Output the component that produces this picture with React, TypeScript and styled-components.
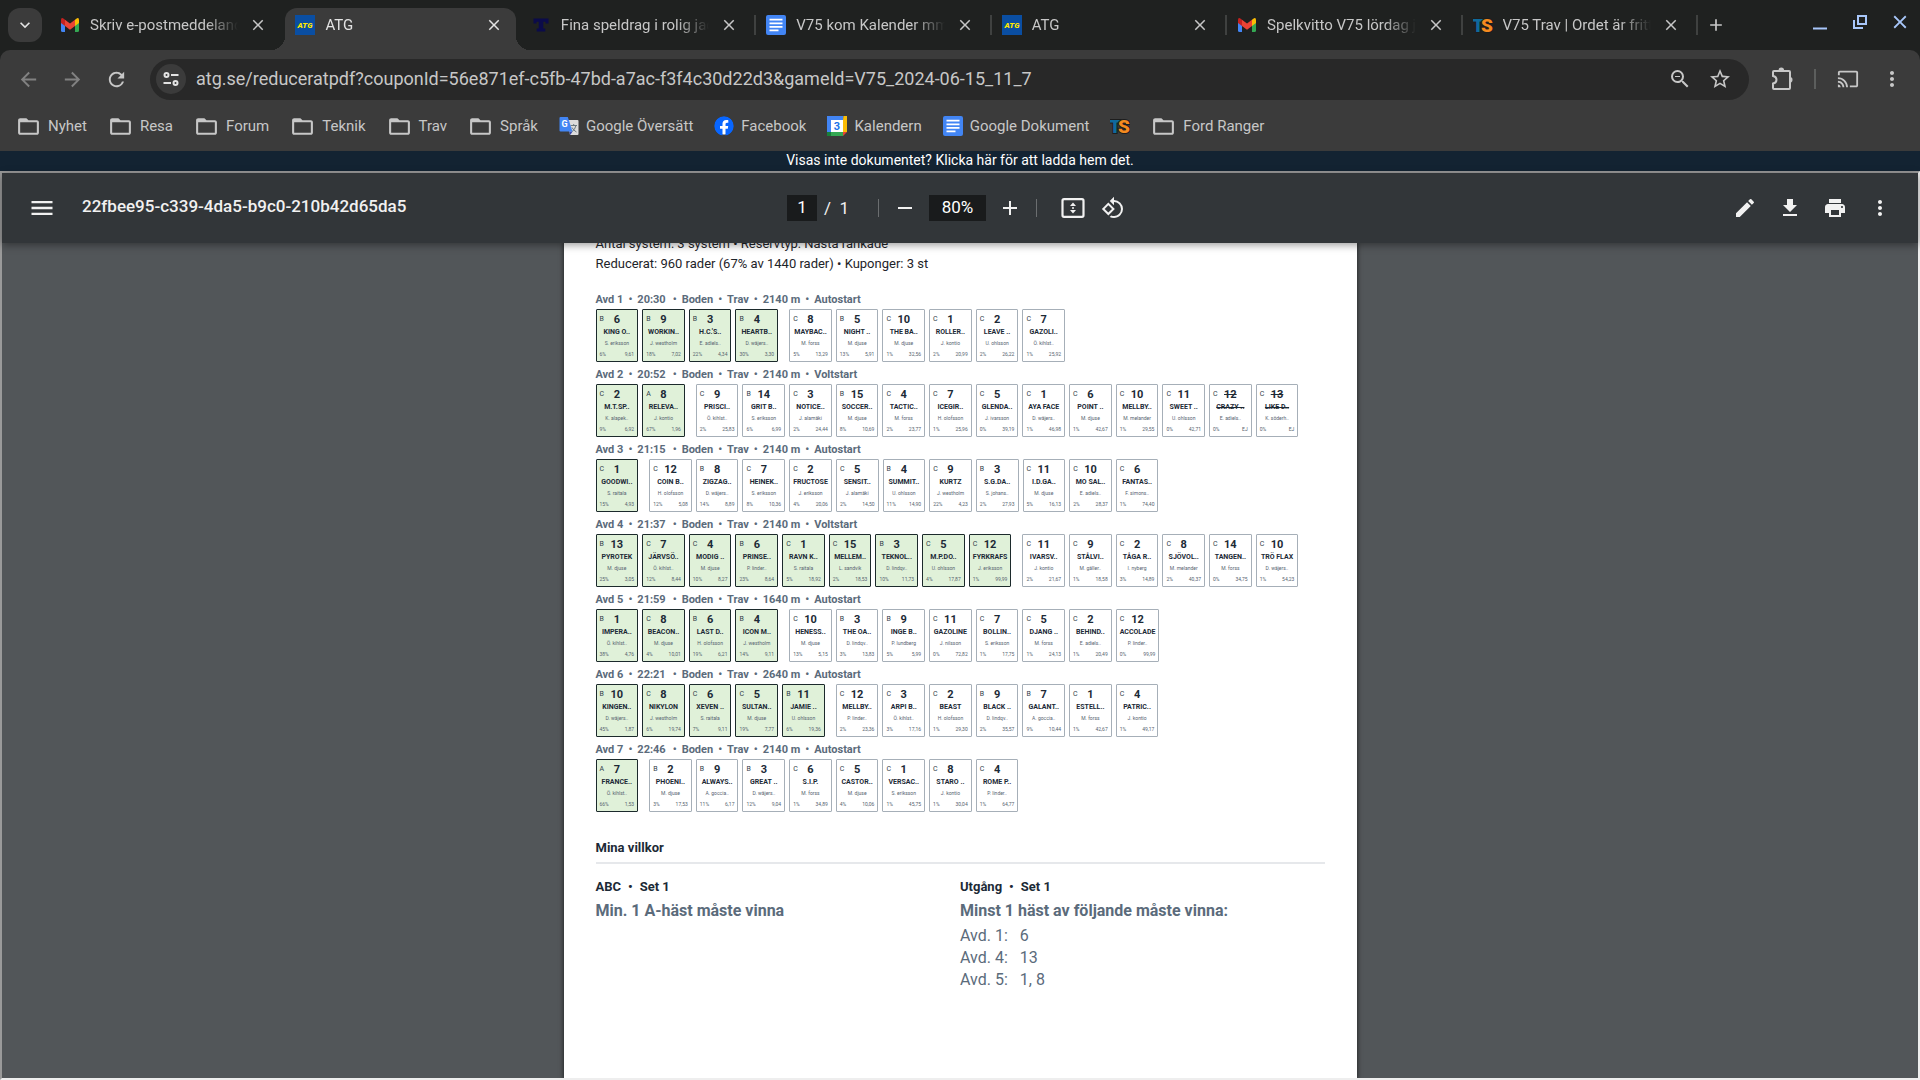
import React from "react";
import styled, { createGlobalStyle, css } from "styled-components";
import {
  MdAdd,
  MdArrowBack,
  MdArrowForward,
  MdClose,
  MdEdit,
  MdFileDownload,
  MdFolderOpen,
  MdKeyboardArrowDown,
  MdMenu,
  MdMoreVert,
  MdPrint,
  MdRefresh,
  MdRemove,
  MdRotate90DegreesCcw,
  MdStarBorder,
  MdZoomOut,
  MdCast,
} from "react-icons/md";
import { FaFacebook } from "react-icons/fa";

const GlobalStyle = createGlobalStyle`
  * { box-sizing: border-box; }
  html, body, #root { height: 100%; }
  body { margin: 0; overflow: hidden; font-family: Roboto, "Liberation Sans", sans-serif; }
  button, input { font: inherit; }
  button { border: 0; padding: 0; background: none; color: inherit; cursor: pointer; }
  h1, h2, h3, p, ul, dl, dd { margin: 0; padding: 0; font-weight: inherit; font-size: inherit; }
  ul { list-style: none; }
  a { color: inherit; text-decoration: none; }
`;

const Window = styled.div`
  display: flex;
  flex-direction: column;
  height: 100vh;
  background: #1f2120;
`;

/* ---------- Tab strip ---------- */

const TabStrip = styled.header`
  display: flex;
  align-items: center;
  flex: none;
  height: 50px;
  padding: 0 8px;
  color: #c7c7c7;
`;

const TabSearch = styled.button`
  display: grid;
  place-items: center;
  flex: none;
  width: 34px;
  height: 34px;
  border-radius: 12px;
  background: #3b3b3b;
  color: #e3e3e3;
  font-size: 20px;
`;

const Tabs = styled.nav`
  display: flex;
  flex: 0 1 1648px;
  min-width: 0;
  margin-left: 8px;
`;

const TabItem = styled.div`
  display: flex;
  align-items: center;
  flex: 1 1 0;
  min-width: 0;
  height: 50px;
`;

const TabBody = styled.div<{ $active?: boolean }>`
  position: relative;
  display: flex;
  align-items: center;
  gap: 8px;
  flex: 1;
  min-width: 0;
  height: 34px;
  padding: 0 10px;
  ${(p) =>
    p.$active &&
    css`
      height: 42px;
      padding-bottom: 8px;
      align-self: flex-end;
      border-radius: 12px 12px 0 0;
      background: #3b3b3b;
      color: #e3e3e3;
      &::before,
      &::after {
        content: "";
        position: absolute;
        bottom: 0;
        width: 14px;
        height: 14px;
      }
      &::before {
        right: 100%;
        background: radial-gradient(circle at 0 0, transparent 14px, #3b3b3b 14px);
      }
      &::after {
        left: 100%;
        background: radial-gradient(circle at 100% 0, transparent 14px, #3b3b3b 14px);
      }
    `}
`;

const TabTitle = styled.button`
  display: flex;
  align-items: center;
  flex: 1;
  min-width: 0;
  gap: 10px;
  text-align: left;
  font-size: 15px;
  line-height: 20px;
`;

const TabText = styled.span`
  flex: 1;
  min-width: 0;
  overflow: hidden;
  white-space: nowrap;
  mask-image: linear-gradient(to right, #000 calc(100% - 32px), transparent);
`;

const IconButton = styled.button<{ $size?: number; $glyph?: number; $dim?: boolean }>`
  display: grid;
  place-items: center;
  flex: none;
  width: ${(p) => p.$size ?? 24}px;
  height: ${(p) => p.$size ?? 24}px;
  font-size: ${(p) => p.$glyph ?? 24}px;
  opacity: ${(p) => (p.$dim ? 0.5 : 1)};
`;

const TabDivider = styled.span<{ $hidden?: boolean }>`
  flex: none;
  width: 2px;
  height: 20px;
  margin-left: 3px;
  background: ${(p) => (p.$hidden ? "transparent" : "#3f4140")};
`;

const NewTab = styled(IconButton)`
  margin-left: 6px;
`;

const WindowControls = styled.div`
  display: flex;
  gap: 16px;
  margin-left: auto;
  padding-bottom: 6px;
  color: #a8c7fa;
`;

/* ---------- Address bar and bookmarks ---------- */

const Chrome = styled.div`
  flex: none;
  border-radius: 10px 10px 0 0;
  background: #3b3b3b;
  color: #c7c7c7;
`;

const AddressRow = styled.div`
  display: flex;
  align-items: center;
  height: 58px;
  padding: 0 16px;
`;

const NavButtons = styled.div`
  display: flex;
  gap: 20px;
  flex: none;
`;

const Omnibox = styled.div`
  display: flex;
  align-items: center;
  flex: 1;
  height: 41px;
  margin: 0 21px 0 22px;
  padding: 0 17px 0 6px;
  border-radius: 21px;
  background: #282828;
`;

const SiteInfo = styled.button`
  display: grid;
  place-items: center;
  width: 30px;
  height: 30px;
  border-radius: 50%;
  background: #3b3b3b;
`;

const UrlInput = styled.input`
  flex: 1;
  min-width: 0;
  margin-left: 10px;
  padding: 0;
  border: 0;
  outline: 0;
  background: none;
  color: #c7c7c7;
  font-size: 18px;
  line-height: 24px;
`;

const OmniboxActions = styled.div`
  display: flex;
  gap: 16px;
`;

const ToolbarActions = styled.div`
  display: flex;
  align-items: center;
  gap: 20px;
`;

const ToolbarDivider = styled.span`
  width: 2px;
  height: 20px;
  background: #5c5e5d;
`;

const Bookmarks = styled.nav`
  display: flex;
  align-items: center;
  gap: 21px;
  height: 43px;
  padding: 0 16px 7px;
`;

const Bookmark = styled.a`
  display: flex;
  align-items: center;
  gap: 7px;
  font-size: 15px;
  line-height: 20px;
  white-space: nowrap;
`;

/* ---------- Web page ---------- */

const DownloadBanner = styled.a`
  flex: none;
  height: 20px;
  background: #132332;
  color: #fff;
  font-size: 14px;
  line-height: 19px;
  text-align: center;
`;

const Viewer = styled.main`
  display: flex;
  flex-direction: column;
  flex: 1;
  min-height: 0;
  border: 2px solid;
  border-color: #9a9a9a #eee #eee #9a9a9a;
  background: #525659;
`;

const PdfToolbar = styled.div`
  position: relative;
  display: grid;
  grid-template-columns: 1fr auto 1fr;
  align-items: center;
  flex: none;
  height: 70px;
  padding: 0 26px;
  background: #323639;
  color: #f1f1f1;
  box-shadow: 0 2px 8px rgba(0, 0, 0, 0.4);
`;

const PdfStart = styled.div`
  display: flex;
  align-items: center;
  gap: 26px;
`;

const FileName = styled.h1`
  padding-bottom: 4px;
  font-size: 17px;
  font-weight: 500;
  line-height: 24px;
`;

const PdfCenter = styled.div`
  display: flex;
  align-items: center;
  padding-right: 8px;
  font-size: 17px;
  line-height: 24px;
`;

const ToolbarInput = styled.input<{ $width: number }>`
  width: ${(p) => p.$width}px;
  height: 26px;
  padding: 0 0 2px;
  border: 0;
  background: #191b1c;
  color: #fff;
  text-align: center;
`;

const PageCount = styled.span`
  margin-left: 7px;
  white-space: pre;
`;

const PdfDivider = styled.span<{ $left: number; $right: number }>`
  width: 1px;
  height: 18px;
  margin: 0 ${(p) => p.$right}px 0 ${(p) => p.$left}px;
  background: #6b6e70;
`;

const ZoomGroup = styled.div`
  display: flex;
  align-items: center;
  gap: 12px;
`;

const FitGroup = styled.div`
  display: flex;
  align-items: center;
  gap: 16px;
`;

const PdfEnd = styled.div`
  display: flex;
  justify-content: flex-end;
  gap: 21px;
`;

const ScrollArea = styled.div`
  display: flex;
  justify-content: center;
  flex: 1;
  min-height: 0;
  overflow: hidden;
`;

const Sheet = styled.article`
  flex: 0 1 793px;
  padding: 0 32px;
  background: #fff;
  box-shadow: 0 0 4px 1px rgba(0, 0, 0, 0.5);
  color: #1c2a36;
`;

const Summary = styled.div`
  margin-top: -9px;
  padding-bottom: 12px;
  font-size: 13px;
  line-height: 20px;
  color: #1e2429;
`;

const Race = styled.section`
  padding-top: 4px;
`;

const RaceHeading = styled.h2`
  display: flex;
  gap: 5px;
  color: #5b6b7b;
  font-size: 11px;
  font-weight: 700;
  line-height: 19px;
`;

const StartTime = styled.span`
  margin-right: 2px;
`;

const Runners = styled.ul`
  display: flex;
  gap: 4px;
`;

const Runner = styled.li<{ $picked: boolean; $spaced: boolean }>`
  flex: 0 0 calc((100% - 89px) / 15);
  height: 53px;
  margin-bottom: -1px;
  margin-left: ${(p) => (p.$spaced ? 7 : 0)}px;
  padding: 3px 3px 0;
  border: 1px solid ${(p) => (p.$picked ? "#1c2a2c" : "#a6afb8")};
  border-radius: 1px;
  background: ${(p) => (p.$picked ? "#e0f1d9" : "#fff")};
  text-align: center;
  white-space: nowrap;
`;

const RunnerTop = styled.div`
  display: grid;
  grid-template-columns: 1fr auto 1fr;
  line-height: 13px;
`;

const Grade = styled.span`
  color: #2f3c48;
  font-size: 7px;
  text-align: left;
`;

const StartNumber = styled.strong<{ $scratched?: boolean }>`
  font-size: 11px;
  font-weight: 700;
  text-decoration: ${(p) => (p.$scratched ? "line-through" : "none")};
`;

const HorseName = styled.h3<{ $scratched?: boolean }>`
  display: flex;
  justify-content: center;
  font-size: 7px;
  font-weight: 700;
  line-height: 12px;
  text-decoration: ${(p) => (p.$scratched ? "line-through" : "none")};
`;

const Driver = styled.p`
  color: #56636f;
  font-size: 5px;
  line-height: 10px;
`;

const Stats = styled.div`
  display: flex;
  justify-content: space-between;
  color: #56636f;
  font-size: 5px;
  line-height: 12px;
`;

const Terms = styled.section`
  margin-top: 27px;
`;

const TermsTitle = styled.h2`
  padding-bottom: 4px;
  border-bottom: 2px solid #e6e8eb;
  font-size: 13px;
  font-weight: 700;
  line-height: 20px;
`;

const TermsGrid = styled.div`
  display: grid;
  grid-template-columns: 1fr 1fr;
  padding-top: 12px;
`;

const SetTitle = styled.h3`
  font-size: 13px;
  font-weight: 700;
  line-height: 22px;
`;

const SetBullet = styled.span`
  margin: 0 7px;
`;

const Rule = styled.p`
  margin-bottom: 1px;
  color: #5b6b7b;
  font-size: 16px;
  font-weight: 700;
  line-height: 26px;
`;

const LegList = styled.dl`
  display: grid;
  grid-template-columns: max-content 1fr;
  column-gap: 12px;
  color: #5b6b7b;
  font-size: 16px;
  line-height: 22px;
`;

/* ---------- Drawn icons ---------- */

const GmailIcon = () => (
  <svg width="20" height="20" viewBox="0 0 20 20" aria-hidden="true">
    <path d="M1 5v10.500q0 1.500 1.500 1.500H5V8.200z" fill="#4285f4" />
    <path d="M19 5v10.500q0 1.500-1.500 1.500H15V8.200z" fill="#34a853" />
    <path d="M15 4.800 17 3.300Q19 2.500 19 5v3l-4 3z" fill="#fbbc04" />
    <path d="M5 4.800 3 3.300Q1 2.500 1 5v3l4 3z" fill="#c5221f" />
    <path d="M5 4.800v6.200l5 3.800 5-3.800V4.800l-5 3.800z" fill="#ea4335" />
  </svg>
);

const AtgIcon = () => (
  <svg width="20" height="20" viewBox="0 0 20 20" aria-hidden="true">
    <rect width="20" height="20" fill="#0a4ea2" />
    <text x="10" y="12.700" textAnchor="middle" fontSize="8" fontWeight="900" fontStyle="italic" fill="#ffe600">
      ATG
    </text>
  </svg>
);

const TIcon = () => (
  <svg width="20" height="20" viewBox="0 0 20 20" aria-hidden="true">
    <path d="M2.500 3.500h15v5h-3V6.800h-2.200v6.700h2v3H5.700v-3h2V6.800H5.500v1.700h-3z" fill="#0b0b4a" />
  </svg>
);

const DocsIcon = () => (
  <svg width="20" height="20" viewBox="0 0 20 20" aria-hidden="true">
    <rect width="20" height="20" rx="2" fill="#4285f4" />
    <path d="M3.500 4.700h13M3.500 8.300h13M3.500 11.800h13M3.500 15.300h9" stroke="#fff" strokeWidth="1.800" />
  </svg>
);

const TsIcon = () => (
  <svg width="20" height="20" viewBox="0 0 20 20" aria-hidden="true">
    <g fontFamily="Roboto" fontWeight="900" fontSize="19" stroke="#1d1d1d" strokeWidth="2" paintOrder="stroke">
      <text x="-1" y="16.700" fill="#0f6a9c">T</text>
      <text x="8" y="16.700" fill="#f58a1f">S</text>
    </g>
  </svg>
);

const TranslateIcon = () => (
  <svg width="20" height="20" viewBox="0 0 20 20" aria-hidden="true">
    <path d="M8 4h10.500q1 0 1 1v13q0 1-1 1H11z" fill="#dcdcdc" />
    <path d="M11.500 9.500h6.500M14.700 8v1.500M17 9.500q-1 4.500-4.500 6.500M13 11.500q1.500 3 4.500 4.500" stroke="#6c7a80" fill="none" />
    <path d="m10 15.500 1.300 3.500 2.200-3.500z" fill="#3949ab" />
    <path d="M1.500 1h7.300l4.700 14.500h-12q-1 0-1-1V2q0-1 1-1z" fill="#4285f4" />
    <text x="2.500" y="11.200" fontSize="9" fontWeight="700" fill="#fff">G</text>
  </svg>
);

const FacebookIcon = styled(FaFacebook)`
  width: 20px;
  height: 20px;
  border-radius: 50%;
  background: radial-gradient(circle, #fff 8px, transparent 9px);
  color: #0866ff;
`;

const CalendarIcon = () => (
  <svg width="20" height="20" viewBox="0 0 20 20" aria-hidden="true">
    <path d="M0 0h16.500v4H4v12H0z" fill="#4285f4" />
    <path d="M16.500 0H20v16h-4V4z" fill="#fbbc04" />
    <path d="M0 16h16v4H0z" fill="#34a853" />
    <path d="M0 16h4v4H0z" fill="#188038" />
    <path d="M16 16h4l-4 4z" fill="#ea4335" />
    <path d="M4 4h12v12H4z" fill="#fff" />
    <text x="10" y="14" textAnchor="middle" fontSize="11" fontWeight="700" fill="#1a73e8">3</text>
  </svg>
);

const TuneIcon = () => (
  <svg width="18" height="18" viewBox="0 0 18 18" fill="none" stroke="#e3e3e3" strokeWidth="2" aria-hidden="true">
    <circle cx="4.500" cy="5" r="2" />
    <path d="M9 5h7.500M1.500 13H9" />
    <circle cx="13.500" cy="13" r="2" />
  </svg>
);

const ExtensionIcon = () => (
  <svg width="24" height="24" viewBox="0 2 24 24" fill="none" stroke="currentColor" strokeWidth="2" aria-hidden="true">
    <path d="M4 6h15q1 0 1 1v16q0 1-1 1H4q-1 0-1-1v-4.500q3.500-.500 3.500-3.700T3 11V7q0-1 1-1z" />
    <path d="M8.500 5.500a2.800 3 0 0 1 5.600 0zM20 12a2.500 2.800 0 0 1 0 5.600z" fill="currentColor" stroke="none" />
  </svg>
);

const FitPageIcon = () => (
  <svg width="24" height="24" viewBox="0 0 24 24" aria-hidden="true">
    <rect x="1.500" y="3.200" width="21" height="17.600" rx="1.500" fill="none" stroke="currentColor" strokeWidth="2.200" />
    <path d="M12 6.500 15 10H9zM12 17.500 9 14h6zM11 11.200h2v1.600h-2z" fill="currentColor" />
  </svg>
);

const MinimizeIcon = () => (
  <svg width="24" height="24" viewBox="0 0 24 24" aria-hidden="true">
    <path d="M5 18.500h14" stroke="currentColor" strokeWidth="2" />
  </svg>
);

const RestoreIcon = () => (
  <svg width="24" height="24" viewBox="0 0 24 24" fill="none" stroke="currentColor" strokeWidth="2" aria-hidden="true">
    <path d="M10 6h8v8h-8zM6 10v8h9" />
  </svg>
);

/* ---------- Data ---------- */

const tabs = [
  { title: "Skriv e-postmeddelanden", icon: <GmailIcon />, divider: false },
  { title: "ATG", icon: <AtgIcon />, active: true, divider: false },
  { title: "Fina speldrag i rolig jackpot", icon: <TIcon />, divider: true },
  { title: "V75 kom Kalender mm", icon: <DocsIcon />, divider: true },
  { title: "ATG", icon: <AtgIcon />, divider: true },
  { title: "Spelkvitto V75 lördag juni", icon: <GmailIcon />, divider: true },
  { title: "V75 Trav | Ordet är fritt", icon: <TsIcon />, divider: true },
];

const folder = <MdFolderOpen size={25} />;

const bookmarks = [
  { label: "Nyhet", icon: folder },
  { label: "Resa", icon: folder },
  { label: "Forum", icon: folder },
  { label: "Teknik", icon: folder },
  { label: "Trav", icon: folder },
  { label: "Språk", icon: folder },
  { label: "Google Översätt", icon: <TranslateIcon /> },
  { label: "Facebook", icon: <FacebookIcon /> },
  { label: "Kalendern", icon: <CalendarIcon /> },
  { label: "Google Dokument", icon: <DocsIcon /> },
  { label: "", icon: <TsIcon /> },
  { label: "Ford Ranger", icon: folder },
];

/* Each runner: grade | start number | name | driver | share | odds */
const races = [
  {
    time: "20:30", distance: "2140 m", start: "Autostart", picked: 4,
    runners: [
      "B|6|KING O..|S. eriksson|6%|9,61", "B|9|WORKIN..|J. westholm|18%|7,02", "B|3|H.C.'S..|E. adiels..|22%|4,34",
      "B|4|HEARTB..|D. wäjers..|30%|3,30", "C|8|MAYBAC..|M. forss|5%|13,29", "B|5|NIGHT ..|M. djuse|13%|5,91",
      "C|10|THE BA..|M. djuse|1%|32,56", "C|1|ROLLER..|J. kontio|2%|20,99", "C|2|LEAVE ..|U. ohlsson|2%|26,22",
      "C|7|GAZOLI..|Ö. kihlst..|1%|25,92",
    ],
  },
  {
    time: "20:52", distance: "2140 m", start: "Voltstart", picked: 2,
    runners: [
      "C|2|M.T.SP..|K. alapek..|9%|6,92", "A|8|RELEVA..|J. kontio|67%|1,96", "C|9|PRISCI..|Ö. kihlst..|2%|25,83",
      "B|14|GRIT B..|S. eriksson|6%|6,99", "C|3|NOTICE..|J. alamäki|2%|24,44", "B|15|SOCCER..|M. djuse|8%|10,69",
      "C|4|TACTIC..|M. forss|2%|23,77", "C|7|ICEGIR..|H. olofsson|1%|25,96", "C|5|GLENDA..|J. ivarsson|0%|39,19",
      "C|1|AYA FACE|D. wäjers..|1%|46,98", "C|6|POINT ..|M. djuse|1%|42,67", "C|10|MELLBY..|M. melander|1%|29,55",
      "C|11|SWEET ..|U. ohlsson|0%|42,71", "C|12|CRAZY ..|E. adiels..|0%|EJ", "C|13|LIKE D..|K. söderh..|0%|EJ",
    ],
  },
  {
    time: "21:15", distance: "2140 m", start: "Autostart", picked: 1,
    runners: [
      "C|1|GOODWI..|S. raitala|15%|4,93", "C|12|COIN B..|H. olofsson|12%|5,08", "B|8|ZIGZAG..|D. wäjers..|14%|8,89",
      "C|7|HEINEK..|S. eriksson|8%|10,36", "C|2|FRUCTOSE|J. eriksson|4%|20,06", "C|5|SENSIT..|J. alamäki|2%|14,50",
      "B|4|SUMMIT..|U. ohlsson|11%|14,90", "C|9|KURTZ|J. westholm|22%|4,23", "B|3|S.G.DA..|S. johans..|2%|27,93",
      "C|11|I.D.GA..|M. djuse|5%|16,13", "C|10|MO SAL..|E. adiels..|2%|28,37", "C|6|FANTAS..|F. simons..|1%|74,40",
    ],
  },
  {
    time: "21:37", distance: "2140 m", start: "Voltstart", picked: 9,
    runners: [
      "B|13|PYROTEK|M. djuse|25%|3,05", "C|7|JÄRVSÖ..|Ö. kihlst..|12%|8,44", "C|4|MODIG ..|M. djuse|10%|8,27",
      "B|6|PRINSE..|P. linder..|23%|8,64", "C|1|RAVN K..|S. raitala|5%|18,92", "C|15|MELLEM..|L. sandvik|2%|18,53",
      "B|3|TEKNOL..|D. lindqv..|10%|11,73", "C|5|M.P.DO..|U. ohlsson|4%|17,87", "C|12|FYRKRAFS|J. eriksson|1%|99,99",
      "C|11|IVARSV..|J. kontio|2%|21,67", "C|9|STÅLVI..|M. gäller..|1%|18,58", "C|2|TÅGA R..|I. nyberg|3%|14,89",
      "C|8|SJÖVOL..|M. melander|2%|40,37", "C|14|TANGEN..|M. forss|0%|34,75", "C|10|TRÖ FLAX|D. wäjers..|1%|54,23",
    ],
  },
  {
    time: "21:59", distance: "1640 m", start: "Autostart", picked: 4,
    runners: [
      "B|1|IMPERA..|Ö. kihlst..|38%|4,76", "C|8|BEACON..|M. djuse|4%|10,01", "B|6|LAST D..|H. olofsson|19%|6,21",
      "B|4|ICON M..|J. westholm|14%|9,11", "C|10|HENESS..|M. djuse|13%|5,15", "B|3|THE OA..|D. lindqv..|3%|13,83",
      "B|9|INGE B..|P. lundberg|5%|5,99", "C|11|GAZOLINE|J. nilsson|0%|72,82", "C|7|BOLLIN..|S. eriksson|1%|17,75",
      "C|5|DJANG ..|M. forss|1%|24,13", "C|2|BEHIND..|E. adiels..|1%|20,49", "C|12|ACCOLADE|P. linder..|0%|99,99",
    ],
  },
  {
    time: "22:21", distance: "2640 m", start: "Autostart", picked: 5,
    runners: [
      "B|10|KINGEN..|D. wäjers..|45%|1,87", "C|8|NIKYLON|J. westholm|6%|19,74", "C|6|XEVEN ..|S. raitala|7%|9,11",
      "C|5|SULTAN..|M. djuse|19%|7,77", "B|11|JAMIE ..|U. ohlsson|6%|19,36", "C|12|MELLBY..|P. linder..|2%|23,36",
      "C|3|ARPI B..|Ö. kihlst..|3%|17,16", "C|2|BEAST|H. olofsson|1%|29,30", "B|9|BLACK ..|D. lindqv..|2%|35,57",
      "B|7|GALANT..|A. goccia..|9%|10,44", "C|1|ESTELL..|M. forss|1%|42,67", "C|4|PATRIC..|J. kontio|1%|49,17",
    ],
  },
  {
    time: "22:46", distance: "2140 m", start: "Autostart", picked: 1,
    runners: [
      "A|7|FRANCE..|Ö. kihlst..|66%|1,53", "B|2|PHOENI..|M. djuse|3%|17,53", "B|9|ALWAYS..|A. goccia..|11%|6,17",
      "B|3|GREAT ..|D. wäjers..|12%|9,04", "C|6|S.I.P.|M. forss|1%|34,89", "C|5|CASTOR..|M. djuse|4%|10,06",
      "C|1|VERSAC..|S. eriksson|1%|45,75", "C|8|STARO ..|J. kontio|1%|30,04", "C|4|ROME P..|P. linder..|1%|64,77",
    ],
  },
];

const legs = [
  ["Avd. 1:", "6"],
  ["Avd. 4:", "13"],
  ["Avd. 5:", "1, 8"],
];

function RaceRow({ index }: { index: number }) {
  const race = races[index];
  return (
    <Race>
      <RaceHeading>
        <span>Avd {index + 1}</span>
        <span>•</span>
        <StartTime>{race.time}</StartTime>
        <span>•</span>
        <span>Boden</span>
        <span>•</span>
        <span>Trav</span>
        <span>•</span>
        <span>{race.distance}</span>
        <span>•</span>
        <span>{race.start}</span>
      </RaceHeading>
      <Runners>
        {race.runners.map((line, i) => {
          const [grade, number, name, driver, share, odds] = line.split("|");
          const scratched = odds === "EJ";
          return (
            <Runner key={line} $picked={i < race.picked} $spaced={i === race.picked}>
              <RunnerTop>
                <Grade>{grade}</Grade>
                <StartNumber $scratched={scratched}>{number}</StartNumber>
              </RunnerTop>
              <HorseName $scratched={scratched}>{name}</HorseName>
              <Driver>{driver}</Driver>
              <Stats>
                <span>{share}</span>
                <span>{odds}</span>
              </Stats>
            </Runner>
          );
        })}
      </Runners>
    </Race>
  );
}

export default function App() {
  return (
    <Window>
      <GlobalStyle />
      <TabStrip>
        <TabSearch aria-label="Sök bland flikar"><MdKeyboardArrowDown /></TabSearch>
        <Tabs>
          {tabs.map((tab, i) => (
            <TabItem key={i}>
              <TabBody $active={tab.active}>
                <TabTitle>
                  {tab.icon}
                  <TabText>{tab.title}</TabText>
                </TabTitle>
                <IconButton $glyph={18} aria-label="Stäng flik"><MdClose /></IconButton>
              </TabBody>
              <TabDivider $hidden={!tab.divider} />
            </TabItem>
          ))}
        </Tabs>
        <NewTab aria-label="Ny flik" $glyph={20}><MdAdd /></NewTab>
        <WindowControls>
          <IconButton aria-label="Minimera"><MinimizeIcon /></IconButton>
          <IconButton aria-label="Återställ"><RestoreIcon /></IconButton>
          <IconButton aria-label="Stäng" $glyph={22}><MdClose /></IconButton>
        </WindowControls>
      </TabStrip>

      <Chrome>
        <AddressRow>
          <NavButtons>
            <IconButton aria-label="Bakåt" $dim $glyph={23}><MdArrowBack /></IconButton>
            <IconButton aria-label="Framåt" $dim $glyph={23}><MdArrowForward /></IconButton>
            <IconButton aria-label="Läs in igen" $glyph={23}><MdRefresh /></IconButton>
          </NavButtons>
          <Omnibox>
            <SiteInfo aria-label="Webbplatsinformation"><TuneIcon /></SiteInfo>
            <UrlInput
              aria-label="Adressfält"
              defaultValue="atg.se/reduceratpdf?couponId=56e871ef-c5fb-47bd-a7ac-f3f4c30d22d3&gameId=V75_2024-06-15_11_7"
            />
            <OmniboxActions>
              <IconButton aria-label="Zoom"><MdZoomOut /></IconButton>
              <IconButton aria-label="Bokmärk"><MdStarBorder /></IconButton>
            </OmniboxActions>
          </Omnibox>
          <ToolbarActions>
            <IconButton aria-label="Tillägg"><ExtensionIcon /></IconButton>
            <ToolbarDivider />
            <IconButton aria-label="Casta" $glyph={22}><MdCast /></IconButton>
            <IconButton aria-label="Meny"><MdMoreVert /></IconButton>
          </ToolbarActions>
        </AddressRow>
        <Bookmarks>
          {bookmarks.map((b) => (
            <Bookmark key={b.label} href="#" aria-label={b.label || "TS"}>
              {b.icon}
              {b.label && <span>{b.label}</span>}
            </Bookmark>
          ))}
        </Bookmarks>
      </Chrome>

      <DownloadBanner href="#">Visas inte dokumentet? Klicka här för att ladda hem det.</DownloadBanner>

      <Viewer>
        <PdfToolbar>
          <PdfStart>
            <IconButton aria-label="Meny" $size={28} $glyph={28}><MdMenu /></IconButton>
            <FileName>22fbee95-c339-4da5-b9c0-210b42d65da5</FileName>
          </PdfStart>
          <PdfCenter>
            <ToolbarInput aria-label="Sidnummer" $width={30} defaultValue="1" />
            <PageCount>/  1</PageCount>
            <PdfDivider $left={29} $right={14} />
            <ZoomGroup>
              <IconButton aria-label="Zooma ut"><MdRemove /></IconButton>
              <ToolbarInput aria-label="Zoomnivå" $width={57} defaultValue="80%" />
              <IconButton aria-label="Zooma in"><MdAdd /></IconButton>
            </ZoomGroup>
            <PdfDivider $left={14} $right={24} />
            <FitGroup>
              <IconButton aria-label="Anpassa till sida"><FitPageIcon /></IconButton>
              <IconButton aria-label="Rotera moturs"><MdRotate90DegreesCcw /></IconButton>
            </FitGroup>
          </PdfCenter>
          <PdfEnd>
            <IconButton aria-label="Rita"><MdEdit /></IconButton>
            <IconButton aria-label="Ladda ned"><MdFileDownload /></IconButton>
            <IconButton aria-label="Skriv ut"><MdPrint /></IconButton>
            <IconButton aria-label="Fler åtgärder"><MdMoreVert /></IconButton>
          </PdfEnd>
        </PdfToolbar>

        <ScrollArea>
          <Sheet>
            <Summary>
              <p>Antal system: 3 system • Reservtyp: Nästa rankade</p>
              <p>Reducerat: 960 rader (67% av 1440 rader) • Kuponger: 3 st</p>
            </Summary>
            {races.map((race, i) => (
              <RaceRow key={race.time} index={i} />
            ))}
            <Terms>
              <TermsTitle>Mina villkor</TermsTitle>
              <TermsGrid>
                <section>
                  <SetTitle>ABC<SetBullet>•</SetBullet>Set 1</SetTitle>
                  <Rule>Min. 1 A-häst måste vinna</Rule>
                </section>
                <section>
                  <SetTitle>Utgång<SetBullet>•</SetBullet>Set 1</SetTitle>
                  <Rule>Minst 1 häst av följande måste vinna:</Rule>
                  <LegList>
                    {legs.map(([leg, horses]) => (
                      <React.Fragment key={leg}>
                        <dt>{leg}</dt>
                        <dd>{horses}</dd>
                      </React.Fragment>
                    ))}
                  </LegList>
                </section>
              </TermsGrid>
            </Terms>
          </Sheet>
        </ScrollArea>
      </Viewer>
    </Window>
  );
}
